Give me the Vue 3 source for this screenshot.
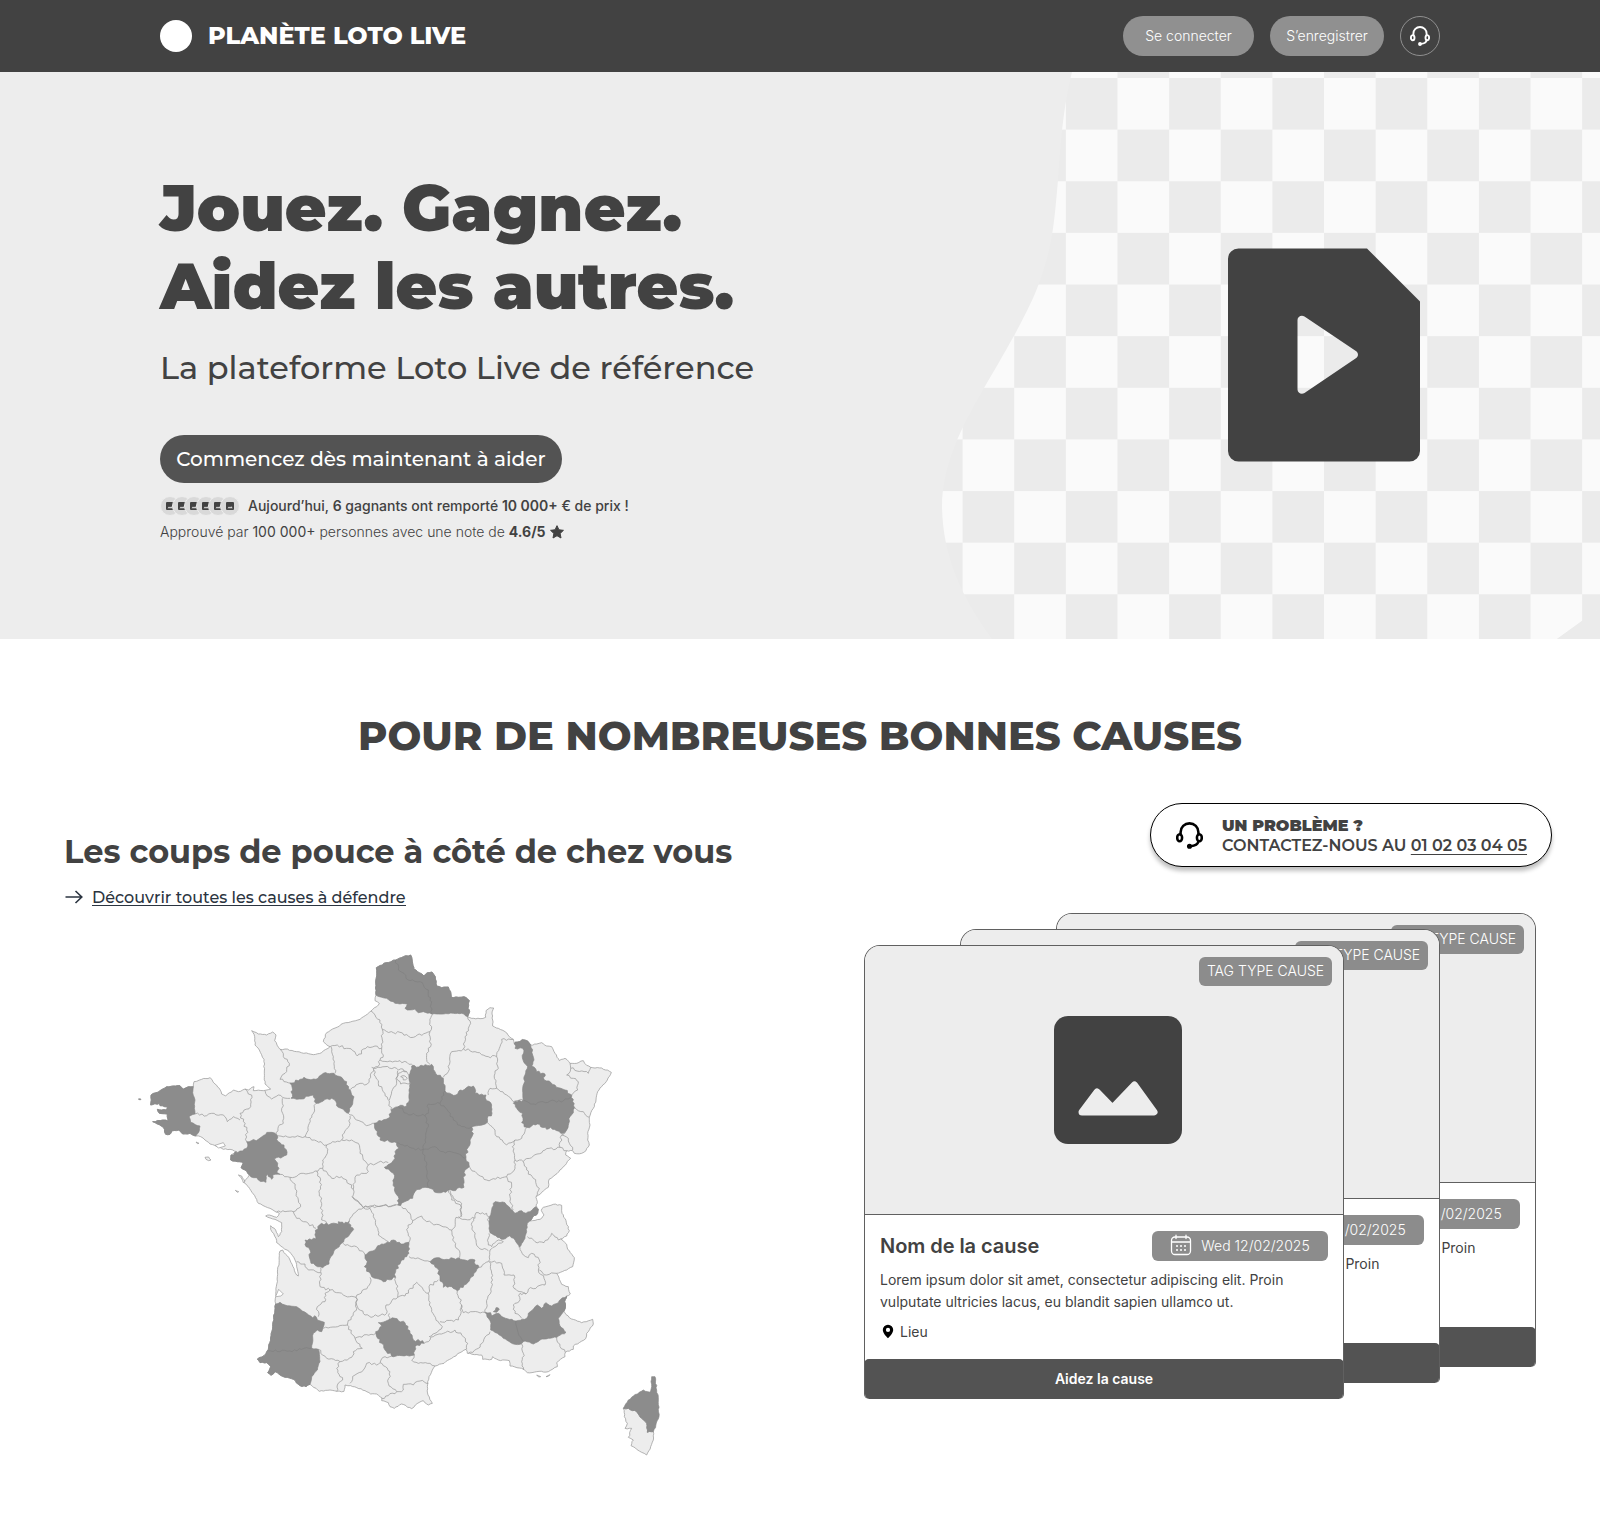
<script setup>
import { h } from 'vue'

const Headset = (props) =>
  h('svg', { viewBox: '0 0 20 20', width: props.size, height: props.size, fill: 'none', stroke: 'currentColor', 'stroke-width': 1.9, 'stroke-linecap': 'round' }, [
    h('path', { d: 'M3.4 9.2V7.6a6.6 6.6 0 0 1 13.2 0v1.6' }),
    h('ellipse', { cx: 2.7, cy: 11.7, rx: 1.8, ry: 2.6 }),
    h('ellipse', { cx: 17.3, cy: 11.7, rx: 1.8, ry: 2.6 }),
    h('path', { d: 'M16.6 14.4c-.5 2.200-2.400 3.200-5.800 3.500' }),
    h('circle', { cx: 10, cy: 18, r: 1.3, fill: 'currentColor', 'stroke-width': 1.2 }),
  ])
Headset.props = ['size']

const cards = ['back', 'middle', 'front']

// Deterministic roughness so that shared borders stay aligned.
const noise = (x, y) => {
  const v = Math.sin(x * 12.9898 + y * 78.233) * 43758.5453
  return (v - Math.floor(v)) * 2 - 1
}
function rough(text, dx = 0, dy = 0, closed = false, amount = 4) {
  const pts = text.trim().split(/\s+/).map((p) => p.split(',').map(Number)).map(([x, y]) => [x + dx, y + dy])
  if (closed) pts.push(pts[0])
  let d = `M${pts[0]}`
  for (let i = 1; i < pts.length; i++) {
    const [x0, y0] = pts[i - 1]
    const [x1, y1] = pts[i]
    const len = Math.hypot(x1 - x0, y1 - y0)
    const n = Math.max(1, Math.round(len / 7))
    const flip = x0 > x1 || (x0 === x1 && y0 > y1)
    for (let k = 1; k < n; k++) {
      const t = k / n
      const x = x0 + (x1 - x0) * t
      const y = y0 + (y1 - y0) * t
      const a = noise(Math.round(x), Math.round(y)) * amount * (flip ? -1 : 1)
      d += `L${(x - ((y1 - y0) / len) * a).toFixed(1)} ${(y + ((x1 - x0) / len) * a).toFixed(1)}`
    }
    d += `L${x1} ${y1}`
  }
  return closed ? d + 'Z' : d
}

const north = '739,83 768,68 797,60 820,50 842,45 848,70 852,88 868,98 882,108 892,98 906,96 916,110 920,138 935,143 955,141 962,155 964,172 985,172 1002,170 1018,182 1014,205 1019,215 1013,230'
const southWest = '540,1333 528,1340 510,1337 490,1318 465,1312 435,1295 423,1306 413,1298 422,1280 410,1268 390,1268 382,1257 402,1247 415,1228'
const finistere = '197,588 180,580 158,582 147,570 125,573 120,583 107,583 100,562 68,545 98,540 115,543 112,522 88,520 82,508 108,510 112,500 90,497 88,490 62,495 63,465 90,452 110,440 150,437 160,447 175,440 190,440'

const mainland = rough(
  north +
    ' 1025,235 1050,236 1067,232 1068,212 1080,203 1091,204 1086,222 1088,240 1088,258 1105,265 1125,275 1138,290 1150,298 1153,312 1162,306 1185,300 1202,315 1220,312 1235,308 1250,318 1265,320 1275,340 1288,362 1305,355 1320,370 1340,370 1360,362 1370,376 1382,382 1415,384 1444,397 1432,420 1415,440 1403,455 1398,480 1390,505 1378,532 1380,555 1373,580 1373,600 1378,615 1368,632 1355,640 1333,640 1328,632 1310,632 1307,645 1322,655 1300,680 1275,705 1257,718 1255,742 1235,757 1218,772 1222,785 1218,795 1225,808 1223,820 1208,832 1200,843 1230,838 1242,825 1234,812 1240,802 1270,793 1295,796 1296,820 1308,842 1318,872 1310,888 1292,897 1310,913 1313,928 1333,953 1328,980 1310,990 1280,1000 1288,1018 1295,1033 1315,1040 1321,1062 1310,1068 1304,1085 1306,1105 1301,1113 1318,1133 1355,1148 1388,1138 1390,1152 1370,1180 1367,1196 1330,1218 1330,1228 1306,1237 1305,1250 1280,1268 1282,1280 1255,1295 1220,1295 1192,1298 1175,1285 1140,1278 1138,1262 1105,1260 1088,1250 1085,1258 1058,1258 1055,1245 1012,1240 1008,1228 990,1238 965,1255 942,1270 915,1278 897,1310 892,1340 894,1365 907,1390 895,1395 880,1382 856,1395 845,1406 815,1392 793,1405 780,1400 775,1388 755,1382 756,1374 740,1362 722,1362 705,1352 662,1337 645,1335 642,1354 620,1354 600,1350 568,1354 ' +
    southWest +
    ' 428,1160 437,1092 436,1075 442,1010 450,933 458,930 480,960 492,985 500,1005 505,1008 500,980 495,960 478,935 458,922 440,908 438,895 422,868 422,857 437,870 445,890 455,875 455,848 435,838 407,828 418,825 440,832 448,820 438,816 420,805 385,790 370,762 355,740 342,728 348,718 358,705 345,690 333,683 340,668 322,665 302,660 303,645 320,635 300,628 280,628 262,620 240,612 225,600 212,590 ' +
    finistere +
    ' 192,425 215,418 240,413 255,432 268,445 275,462 287,468 310,450 325,455 345,447 355,450 372,440 370,452 400,452 422,447 405,432 403,400 402,358 388,330 375,315 374,290 365,272 385,282 410,285 428,276 438,285 434,302 450,328 465,327 500,335 550,344 575,338 600,320 580,305 590,278 640,250 690,238 723,213 745,195 748,190 735,182 738,165 737,130 740,100',
  0, 0, true, 1.6)

const light = [
  rough('550,655 565,655 590,665 605,685 620,700 622,727 640,725 640,750 632,770 620,795 605,787 573,767 580,750 565,742 575,715 555,715 562,700 553,680', 930, 750, true, 2),
  rough('225,652 236,651 243,660 236,662 228,658', 0, 0, true, 1),
  rough('325,705 335,708 345,724 340,728 334,714', 0, 0, true, 1),
  rough('198,606 207,610 202,611', 0, 0, true, 1),
  rough('316,751 326,755 322,757', 0, 0, true, 1),
  rough('290,555 302,560 296,561', 930, 750, true, 1),
  rough('318,560 330,554 325,559', 930, 750, true, 1),
]

const dark = [
  rough(north + ' 995,220 970,220 940,222 905,222 880,215 865,218 855,207 832,210 825,205 832,192 795,190 770,175 748,170 738,165 737,130 740,100', 0, 0, true, 1.6),
  rough(finistere + ' 188,458 195,480 193,505 195,522 177,530 182,547 210,558 208,572', 0, 0, true, 1.6),
  rough('350,605 385,598 418,577 440,585 445,605 462,615 470,645 433,657 447,685 440,697 450,703 428,705 425,718 413,703 408,727 385,720 358,705 345,690 333,683 340,668 322,665 302,660 303,645 350,625', 0, 0, true),
  rough('480,430 522,412 558,418 580,400 612,400 635,412 650,425 655,448 672,470 668,492 655,520 640,508 625,502 618,485 605,475 580,483 558,490 550,465 500,478 483,475 488,450', 0, 0, true),
  rough('845,378 880,378 905,373 915,395 940,415 940,430 945,453 965,463 978,465 990,450 1030,438 1035,460 1068,465 1070,482 1085,495 1086,520 1072,535 1072,547 1025,562 1030,580 1020,600 1015,622 1008,650 1018,680 1005,690 1002,742 970,752 940,755 920,758 895,743 885,742 870,748 855,755 848,775 822,786 812,797 803,795 805,770 793,750 790,700 763,682 785,668 795,655 795,635 807,625 800,608 750,600 742,575 733,550 755,543 780,530 783,510 805,500 830,498 838,480 837,450 840,400', 0, 0, true),
  rough('343,312 352,306 375,300 392,315 398,345 402,360 395,378 410,395 435,402 433,420 465,435 495,450 515,465 518,485 524,503 510,530 497,575 490,580 470,572 452,562 440,568 412,552 395,558 380,562 365,548 368,520 350,505 340,490 370,480 372,430 375,405 383,380 372,368 368,325 345,325', 810, 0, true),
  rough('165,35 195,38 212,58 225,70 245,62 258,70 270,65 288,50 295,58 293,70 278,82 262,100 260,125 255,145 238,172 225,150 210,137 190,148 172,142 150,128 147,95 155,60 160,40', 930, 750, true, 2),
  rough('275,100 325,103 325,95 342,102 358,92 362,112 371,118 358,135 335,160 310,190 300,205 297,222 278,233 243,220 240,208 240,180 228,170 225,150 258,147 257,128 268,105', 300, 750, true),
  rough('405,195 455,162 480,158 490,150 520,162 537,157 537,190 530,200 515,210 497,245 497,262 460,275 425,260 403,230 412,215 405,205', 300, 750, true),
  rough('-30,215 -10,203 20,208 40,205 75,210 105,210 107,225 117,232 100,258 72,285 52,302 35,290 10,292 0,265 -8,235', 930, 750, true),
  rough(southWest + ' 428,1160 437,1092 450,1087 465,1095 500,1100 530,1120 548,1133 555,1127 562,1140 583,1147 575,1175 562,1170 550,1180 545,1225 565,1228 570,1265 562,1290 545,1310', 0, 0, true, 1.6),
  rough('445,398 480,388 495,385 525,398 540,430 550,450 578,452 582,460 555,470 553,495 515,497 490,500 465,480 455,460 440,440 437,425 455,408', 300, 750, true),
  rough('135,367 152,368 155,378 175,370 190,382 228,393 260,385 265,370 292,345 305,355 318,338 335,348 355,338 362,328 380,318 374,335 376,355 355,385 360,408 378,427 350,442 325,445 300,450 280,462 255,453 240,463 225,463 190,445 172,430 152,420 153,400', 930, 750, true, 2),
  rough('160,365 168,353 178,357 170,367', 930, 750, true),
  rough('635,560 645,560 650,600 655,630 657,680 640,725 622,727 620,700 605,685 590,665 565,655 550,655 565,630 580,618 610,600 630,607 635,590', 930, 750, true, 2),
  rough('25,477 31,476 33,479 27,479', 0, 0, true, 1),
]

const lines = (dx, dy, list) => list.trim().split('\n').map((l) => rough(l, dx, dy))
const borders = [
  ...lines(0, 0, `723,213 735,225 750,240 757,268
757,268 790,278 810,277 850,292 900,275
757,268 757,300 755,325 760,345 750,360 745,378
750,360 780,363 810,362 850,378
600,320 622,315 650,325 668,332 682,348 712,320 735,318 755,325
603,320 610,350 615,400
450,328 460,350 478,370 465,400 450,418 488,432
405,452 412,468 425,477 445,465 480,475
655,448 690,430 712,432 722,412 730,385 745,378
725,382 765,380 800,385 830,395
730,390 745,430 765,460 778,483 782,510
803,392 800,430 785,455 778,480
805,400 830,395 838,415 838,432 812,432 800,415 805,400
812,410 825,408 832,415 820,420 812,410
655,520 680,540 710,557 735,550
558,490 550,520 538,550 525,590 560,603 590,615 635,600 645,572 660,550 660,528
635,600 665,600 685,610 690,640 715,675 745,667 775,668
590,615 592,640 578,660 578,685 605,715 635,710 650,720 670,748 680,705 710,700 715,675
457,475 458,520 460,550 445,560 440,585 480,592 525,590
345,447 355,462 365,465 362,500 330,520 340,545 350,570 350,605
195,522 230,527 245,520 285,530 292,545 310,530 330,540
450,703 480,712 520,700 555,693 578,685
480,712 495,740 505,780 512,800 490,815
560,693 572,720 568,760 575,790 575,840 590,850
670,748 668,770 685,785 700,802 740,798 803,795`),
  ...lines(300, 750, `140,66 165,65 190,65 200,85 235,100 258,115
365,20 372,25 400,53 375,68 358,92
400,53 420,55 430,80 440,110 445,135 475,155
400,53 440,50 460,46 498,45
515,50 540,70 548,92 530,118 540,150 537,157
340,160 365,170 385,175 405,195
272,233 272,245 270,290 300,300 340,315 378,322 418,285 420,262
200,215 225,222 235,240 272,248
300,300 285,310 285,335 262,350 265,380
378,322 380,355 370,370 352,405 280,415
378,322 380,345 405,375 430,380 470,370 468,345 503,322 497,262
352,405 375,445 437,430
478,370 478,390
375,445 397,475 370,485 365,502 330,515 290,505 265,478
330,515 320,535 338,570 322,585 320,604
360,580 375,555 400,540 410,520 440,525 450,518 480,545 475,580 500,605 455,625
450,518 453,510 465,500 490,500
553,495 545,510 565,520 600,520 615,528
500,605 520,600 520,583 550,585 570,573 595,580
582,460 610,440 640,430 675,420 700,440 713,460 710,478
503,322 525,318 560,277 580,300 595,310 597,290 625,270
595,310 605,365 625,395 637,410 615,430 597,440
537,200 570,207 600,215
548,92 575,78 590,95 620,103 665,120 668,150 690,190 688,208
665,120 675,110 678,82 692,80 692,45 665,30 655,0`),
  ...lines(930, 750, `55,80 75,88 105,85 108,68 140,70 147,95
100,85 97,110 108,150 115,172 145,182
147,130 145,165 155,170 175,150 190,155 165,170 150,180 145,215 117,232
148,215 155,250 155,290 140,340 135,367
148,215 185,220 192,255 222,255 222,295 258,312
258,312 265,298 315,285 312,265 295,240 298,210 275,190 265,203 250,195 240,172
262,140 285,155 312,158 335,130 355,150 362,147
258,312 240,310 237,335 220,345 225,370 240,378 245,385
298,240 320,255 350,250
52,302 65,345 70,368 135,367
65,345 55,390 0,395
150,425 130,455 115,475 85,490
245,462 250,490 245,515 250,540
350,442 360,470 376,487`),
  ...lines(810, 0, `100,222 90,245 95,260 90,275 92,320 80,340 80,358 90,373
203,230 212,250 205,265 195,290 190,327
190,327 155,335 150,365 145,395 130,412
190,327 225,335 265,350 290,350 300,320 305,298 340,298
290,350 295,385 285,400 290,445 270,445 265,465
290,445 340,485 370,480
262,547 285,570 290,590 320,615 345,600 365,595 380,562
345,600 337,620 345,660 370,665 435,630 480,622 485,585 497,577
480,622 500,632
485,585 505,595 518,630
510,370 512,385 565,400 572,382
512,385 500,405 520,415 535,425 533,450 515,465
524,503 550,515 568,532
370,665 380,690 400,715 418,745 408,770
208,680 235,705 260,720 320,710 345,685 345,660
320,710 335,735 330,770 340,810
150,752 160,775 185,790 185,830`),
]
const darkBorders = [
  ...lines(0, 0, '797,60 805,90 822,100 828,115 840,122 870,125 895,150 895,170 905,185 905,222\n415,1232 450,1235 515,1228 545,1225'),
  ...lines(810, 0, `-5,498 20,520 75,528 85,520 85,492 120,490 125,470 135,453
120,490 145,515 160,540 185,560 215,562
-10,608 40,625 70,628 75,600 85,560 75,528
70,628 78,680 85,743
70,628 105,620 130,635 170,640 195,655
370,480 400,492 450,483 490,483 517,468`),
  ...lines(930, 750, '228,393 235,430 250,453'),
]
</script>

<template>
  <div class="page">
    <header class="topbar">
      <div class="brand"><span class="logo"></span><span class="name">PLANÈTE LOTO LIVE</span></div>
      <nav class="actions">
        <button class="pill login">Se connecter</button>
        <button class="pill signup">S’enregistrer</button>
        <button class="round"><Headset :size="20" /></button>
      </nav>
    </header>

    <section class="hero">
      <svg class="visual" viewBox="940 72 660 567" width="660" height="567">
        <defs>
          <pattern id="checker" x="962.6" y="78" width="103.26" height="103.26" patternUnits="userSpaceOnUse">
            <rect width="103.26" height="103.26" fill="#fafafa" />
            <rect width="51.63" height="51.63" fill="#ebebeb" />
            <rect x="51.63" y="51.63" width="51.63" height="51.63" fill="#ebebeb" />
          </pattern>
        </defs>
        <path fill="url(#checker)" d="M1072 72C1064 105 1061 135 1058 180C1054 225 1053 245 1038 286C1030 308 1010 344 984 388C962 426 942 465 942 507C943 555 960 595 992 639H1557L1582 621L1600 608V72Z" />
        <path fill="#ebebeb" d="M1582 621L1600 608V639H1557Z" />
        <path fill="#424242" fill-rule="evenodd" d="M1238 248.500H1367L1420 301.500V451a10.500 10.500 0 0 1-10.500 10.500H1238.500A10.500 10.500 0 0 1 1228 451V259A10.500 10.500 0 0 1 1238.500 248.500ZM1297.500 320V389.500C1297.500 393 1301.500 395 1304.500 393L1355.500 358.500C1358.800 356.500 1358.800 352.800 1355.500 350.800L1304.500 316.500C1301.500 314.500 1297.500 316.500 1297.500 320Z" />
      </svg>
      <div class="pitch">
        <h1>Jouez. Gagnez.<br />Aidez les autres.</h1>
        <p class="lead">La plateforme Loto Live de référence</p>
        <button class="cta">Commencez dès maintenant à aider</button>
        <div class="winners">
          <span class="avatars">
            <svg v-for="i in 6" :key="i" viewBox="0 0 20 20" width="20" height="20">
              <circle cx="10" cy="10" r="9.500" fill="#d9d9d9" stroke="#ededed" stroke-width="1" />
              <rect x="6" y="6" width="8" height="8" rx="1" fill="#424242" />
              <path d="M7.500 12.300L9 10.500L10 11.500L11.200 10.200L12.700 12.300Z" fill="#d9d9d9" />
            </svg>
          </span>
          <span class="wtext">Aujourd’hui, <b>6</b> gagnants ont remporté <b>10 000+</b> € de prix !</span>
        </div>
        <p class="rating">Approuvé par <i>100 000+</i> personnes avec une note de <b>4.6/5</b>
          <svg viewBox="0 0 24 24" width="16" height="16"><path fill="#424242" stroke="#424242" stroke-width="1.500" stroke-linejoin="round" d="M12 2.500L14.900 8.700L21.700 9.500L16.700 14.200L18 21L12 17.600L6 21L7.300 14.200L2.300 9.500L9.100 8.700Z" /></svg>
        </p>
      </div>
    </section>

    <section class="causes">
      <h2>POUR DE NOMBREUSES BONNES CAUSES</h2>
      <div class="columns">
        <div class="left">
          <h3>Les coups de pouce à côté de chez vous</h3>
          <div class="discover">
            <svg viewBox="0 0 20 20" width="20" height="20" fill="none" stroke="#2b3440" stroke-width="1.600"><path d="M1.500 10H17.500M11.500 4L17.800 10L11.500 16" /></svg>
            <a>Découvrir toutes les causes à défendre</a>
          </div>
          <svg class="map" viewBox="0 0 1620 1560" width="540" height="520" stroke-linejoin="round">
            <g fill="#ededed" stroke="#999" stroke-width="2.200">
              <path :d="mainland" />
              <path v-for="(d, i) in light" :key="i" :d="d" />
            </g>
            <path d="M438 1067L446 1048L460 1062L452 1068L439 1070Z" fill="#fff" stroke="#999" stroke-width="2" />
            <path d="M255 616L280 608L286 618L266 624Z" fill="#fff" stroke="#999" stroke-width="2" />
            <path v-for="(d, i) in borders" :key="i" :d="d" fill="none" stroke="#999" stroke-width="2.200" />
            <path v-for="(d, i) in dark" :key="i" :d="d" fill="#8c8c8c" stroke="#858585" stroke-width="2" />
            <path v-for="(d, i) in darkBorders" :key="i" :d="d" fill="none" stroke="#7e7e7e" stroke-width="1.800" />
          </svg>
        </div>

        <div class="right">
          <div class="help">
            <Headset :size="27" />
            <div>
              <strong>UN PROBLÈME ?</strong>
              <span class="call">CONTACTEZ-NOUS AU <u>01 02 03 04 05</u></span>
            </div>
          </div>
          <div class="stack">
            <article v-for="c in cards" :key="c" class="card" :class="c">
              <div class="picture">
                <span class="tag">TAG TYPE CAUSE</span>
                <svg viewBox="0 0 128 128" width="128" height="128">
                  <rect width="128" height="128" rx="14" fill="#424242" />
                  <path d="M28 96L43 76L58.500 92L80.500 69L100 96Z" fill="#ededed" stroke="#ededed" stroke-width="7" stroke-linejoin="round" />
                </svg>
              </div>
              <div class="body">
                <div class="titlebar">
                  <h4>Nom de la cause</h4>
                  <span class="date">
                    <svg viewBox="0 0 22 22" width="22" height="22" fill="none" stroke="#fff" stroke-width="1.300" stroke-linecap="round">
                      <rect x="1.500" y="3" width="19" height="17.500" rx="3.500" />
                      <path d="M2 8H20M6 1.200V4.500M16 1.200V4.500" />
                      <path stroke-width="2" d="M7 12h.01M11 12h.01M15 12h.01M7 16h.01M11 16h.01M15 16h.01" />
                    </svg>
                    Wed 12/02/2025
                  </span>
                </div>
                <p>Lorem ipsum dolor sit amet, consectetur adipiscing elit. Proin<br />vulputate ultricies lacus, eu blandit sapien ullamco ut.</p>
                <div class="place">
                  <svg viewBox="0 0 12 15" width="12" height="15"><path fill="#000" fill-rule="evenodd" d="M6 .7A5.200 5.200 0 0 0 .8 6C.8 9.500 6 14.300 6 14.300S11.200 9.500 11.200 6A5.200 5.200 0 0 0 6 .7ZM6 3.800a2.100 2.100 0 1 1 0 4.200a2.100 2.100 0 0 1 0-4.200Z" /></svg>
                  Lieu
                </div>
              </div>
              <button class="support">Aidez la cause</button>
            </article>
          </div>
        </div>
      </div>
    </section>
  </div>
</template>

<style>
body { margin: 0; background: #fff; }
</style>

<style scoped>
* { box-sizing: border-box; }
.page { width: 1600px; height: 1540px; overflow: hidden; background: #fff; color: #424242; font-family: Inter, "Liberation Sans", sans-serif; font-size: 14px; }
h1, h2, h3, h4, p { margin: 0; }
button { border: 0; padding: 0; font: inherit; }
svg { flex: none; }
h1, h2, h3, .name, .lead, .cta, .discover a, .help { font-family: Montserrat, Inter, sans-serif; white-space: nowrap; }

.topbar { height: 72px; padding: 0 160px; background: #424242; display: flex; align-items: center; justify-content: space-between; color: #fff; }
.brand { display: flex; align-items: center; gap: 16px; }
.logo { width: 32px; height: 32px; border-radius: 50%; background: #fff; }
.name { font-size: 24px; font-weight: 800; padding-bottom: 1px; }
.actions { display: flex; gap: 16px; }
.pill { height: 40px; border-radius: 20px; background: #909090; color: #fff; font-weight: 300; padding-bottom: 2px; }
.login { width: 131px; }
.signup { width: 114px; }
.round { width: 40px; height: 40px; border: 1px solid #909090; border-radius: 50%; background: none; color: #fff; display: flex; align-items: center; justify-content: center; }

.hero { position: relative; height: 567px; background: #ededed; overflow: hidden; }
.visual { position: absolute; right: 0; top: 0; }
.pitch { padding: 97px 0 0 160px; display: flex; flex-direction: column; align-items: flex-start; }
h1 { font-size: 64px; line-height: 78px; font-weight: 900; }
.lead { margin-top: 23px; font-size: 32px; line-height: 40px; font-weight: 500; }
.cta { margin-top: 47px; width: 402px; height: 48px; border-radius: 24px; background: #535353; color: #fff; font-size: 20px; font-weight: 500; }
.winners { margin-top: 13px; display: flex; align-items: center; height: 20px; font-weight: 500; }
.avatars { display: flex; width: 88px; }
.avatars svg { margin-right: -8px; }
.wtext { padding-bottom: 2px; }
.wtext b { font-weight: 600; }
.rating { margin-top: 6px; height: 20px; line-height: 20px; font-weight: 300; white-space: nowrap; }
.rating i { font-style: normal; font-weight: 400; }
.rating b { font-weight: 700; }
.rating svg { vertical-align: -3px; margin-left: 3px; }

h2 { padding-top: 73px; text-align: center; font-size: 40px; line-height: 48px; font-weight: 800; }
.columns { display: flex; justify-content: space-between; }
.left { width: 760px; padding: 72px 0 0 64px; }
h3 { font-size: 32px; line-height: 40px; font-weight: 700; }
.discover { display: flex; align-items: center; gap: 8px; height: 24px; margin-top: 13px; }
.discover a { font-size: 16px; line-height: 20px; font-weight: 500; color: #2b3440; border-bottom: 1px solid #2b3440; height: 18px; }
.map { display: block; margin: 31px 0 0 66px; }

.right { width: 736px; padding-top: 43px; }
.help { width: 402px; height: 64px; margin-left: 286px; border: 1px solid #000; border-radius: 32px; box-shadow: 0 4px 4px rgba(0, 0, 0, .25); background: #fff; display: flex; align-items: center; padding-left: 25px; gap: 19px; font-size: 16px; line-height: 20px; color: #000; }
.help div { display: flex; flex-direction: column; color: #424242; padding-top: 1px; }
.help strong { font-weight: 900; }
.call { font-weight: 600; }
.help u { text-underline-offset: 3px; text-decoration-thickness: 1px; }

.stack { display: grid; margin-top: 46px; width: 672px; }
.card { position: relative; grid-area: 1 / 1; width: 480px; height: 454px; border: 1px solid #606060; border-bottom: 0; border-radius: 16px 16px 5px 5px; background: #fff; overflow: hidden; display: flex; flex-direction: column; }
.back { margin: 0 0 0 192px; }
.middle { margin: 16px 0 0 96px; }
.front { margin: 32px 0 0 0; }
.picture { position: relative; height: 269px; padding: 0 0 1px 28px; background: #ededed; border-bottom: 1px solid #606060; display: flex; align-items: center; justify-content: center; flex: none; }
.tag { position: absolute; right: 11px; top: 11px; width: 133px; height: 29px; border-radius: 6px; background: #8c8c8c; color: #fff; font-weight: 300; line-height: 28px; text-align: center; }
.body { flex: 1; padding: 16px 15px 0; }
.titlebar { display: flex; justify-content: space-between; align-items: center; height: 30px; }
h4 { font-size: 20px; font-weight: 600; letter-spacing: -.05px; padding-bottom: 1px; }
.date { width: 176px; height: 30px; border-radius: 6px; background: #8c8c8c; color: #fff; font-weight: 300; display: flex; align-items: center; justify-content: center; gap: 9px; padding-bottom: 2px; }
.body p { margin-top: 8px; line-height: 22px; white-space: nowrap; }
.place { margin-top: 8px; height: 20px; display: flex; align-items: center; gap: 6px; padding-left: 2px; }
.support { height: 40px; flex: none; margin: 0 -1px; padding-bottom: 2px; border-radius: 5px; background: #535353; color: #fff; font-weight: 600; }
</style>
